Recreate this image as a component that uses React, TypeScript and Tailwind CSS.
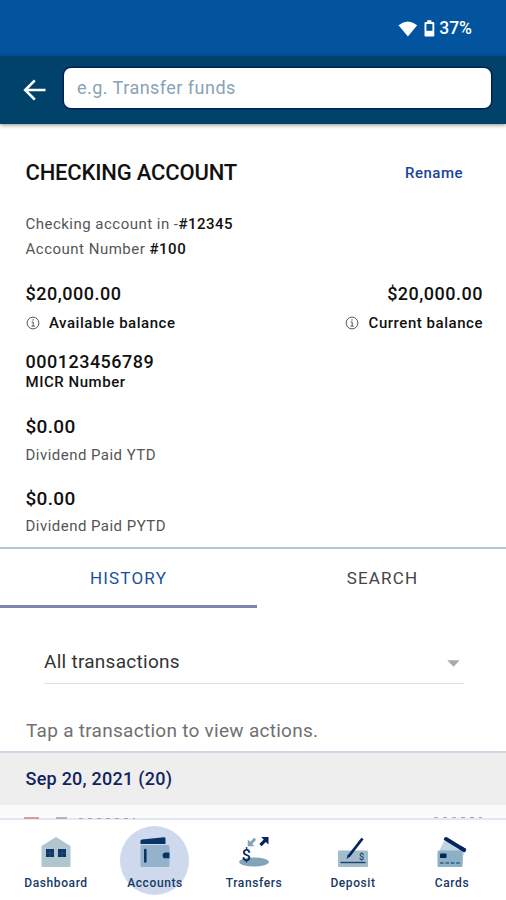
import React from "react";

function StatusBar() {
  return (
    <div className="flex h-[56px] shrink-0 items-center justify-end bg-[#02549e] pt-px pr-[34px] text-white">
      <svg width="20" height="16" viewBox="0 0 20 16" className="mr-[6px]">
        <path d="M0.5 4.2Q9.8 -3 19.2 4.2L9.9 15.5Z" fill="#fff" />
      </svg>
      <svg width="11" height="17" viewBox="0 0 11 17" className="mr-[4px]">
        <path d="M3.2 0.3h4.2v1.7H9.2Q10.3 2 10.3 3.1V15.4Q10.3 16.5 9.2 16.5H1.6Q0.5 16.5 0.5 15.4V3.1Q0.5 2 1.6 2H3.2Z" fill="#fff" />
        <rect x="2.4" y="4" width="6" height="6.8" fill="#02549e" />
      </svg>
      <span className="mt-px text-[17.5px] leading-none font-medium">37%</span>
    </div>
  );
}

function SearchHeader() {
  return (
    <div className="relative z-10 flex h-[68px] shrink-0 items-center bg-[#01426a] pr-[15px] pl-[23px] shadow-[0_1px_4px_rgba(0,0,0,0.45)]">
      <svg width="24" height="22" viewBox="0 0 24 22" fill="none" stroke="#fff" strokeWidth="2.6" className="mr-[17px] shrink-0">
        <path d="M22.5 11H2.5M11.8 1.4L2.2 11L11.8 20.6" />
      </svg>
      <div className="mb-[5px] flex h-[40px] flex-1 items-center rounded-[7px] bg-white pl-[13px] text-[18px] tracking-[0.47px] text-[#87a3b4] shadow-[0_0_0_1.5px_#02205c]">
        e.g. Transfer funds
      </div>
    </div>
  );
}

function InfoIcon() {
  return (
    <svg width="14" height="14" viewBox="0 0 14 14" fill="none" stroke="#444" strokeWidth="0.9">
      <circle cx="7" cy="7" r="5.9" />
      <path d="M5.6 6h1.6v4M5.4 10.1h3.4" />
      <circle cx="7" cy="3.9" r="0.7" fill="#444" stroke="none" />
    </svg>
  );
}

function AccountDetails() {
  return (
    <section className="h-[423px] shrink-0 pr-[23px] pl-[25.5px] pt-[34px] text-[15px] text-[#111]">
      <div className="flex h-[29px] items-center justify-between pr-[20px]">
        <h1 className="text-[22px] leading-none font-medium tracking-[-0.18px]">CHECKING ACCOUNT</h1>
        <span className="mt-[2px] text-[15px] font-medium tracking-[0.5px] text-[#1a449a]">Rename</span>
      </div>
      <div className="mt-[24px] h-[26px] leading-[26px] tracking-[0.48px] text-[#555]">
        Checking account in -<b className="font-medium text-[#111]">#12345</b>
      </div>
      <div className="h-[25px] leading-[25px] tracking-[0.5px] text-[#555]">
        Account Number <b className="font-medium text-[#111]">#100</b>
      </div>
      <div className="mt-[16px] flex h-[30px] items-center justify-between text-[18px] font-medium tracking-[0.5px]">
        <span>$20,000.00</span>
        <span>$20,000.00</span>
      </div>
      <div className="mt-[1px] flex h-[28px] items-center justify-between font-medium tracking-[0.54px]">
        <span className="flex items-center gap-[9.5px]"><InfoIcon />Available balance</span>
        <span className="flex items-center gap-[9.5px]"><InfoIcon />Current balance</span>
      </div>
      <div className="mt-[14px] h-[22px] text-[18px] leading-[22px] font-medium tracking-[0.5px]">000123456789</div>
      <div className="h-[20px] leading-[19px] font-medium tracking-[0.54px]">MICR Number</div>
      <div className="mt-[22px] h-[24px] text-[19px] leading-[24px] font-medium tracking-[0.3px]">$0.00</div>
      <div className="mt-[6px] h-[20px] leading-[20px] tracking-[0.47px] text-[#555]">Dividend Paid YTD</div>
      <div className="mt-[22px] h-[24px] text-[19px] leading-[24px] font-medium tracking-[0.3px]">$0.00</div>
      <div className="mt-[5px] h-[20px] leading-[20px] tracking-[0.47px] text-[#555]">Dividend Paid PYTD</div>
    </section>
  );
}

function Tabs() {
  return (
    <div className="flex h-[61px] shrink-0 border-t-2 border-[#b5c4df] text-[17px] tracking-[1.2px]">
      <div className="flex w-[257px] items-center justify-center border-b-[3px] border-[#8085ad] pt-[3px] text-[#1d4f9f]">HISTORY</div>
      <div className="flex flex-1 items-center justify-center border-b-[3px] border-transparent pt-[3px] pl-[2px] text-[#444]">SEARCH</div>
    </div>
  );
}

function DashboardIcon() {
  return (
    <svg width="34" height="32" viewBox="0 0 34 32">
      <path d="M17 1L31.5 10V29.5Q31.5 31 30 31H4Q2.500 31 2.500 29.5V10Z" fill="#b0c5ce" />
      <path d="M7 13h8v8H7zM19 13h8v8H19z" fill="#0b3668" />
      <path d="M7 17h8M11 13v8M19 17h8M23 13v8" stroke="#315880" strokeWidth="0.7" />
    </svg>
  );
}

function AccountsIcon() {
  return (
    <svg width="34" height="32" viewBox="0 0 34 32">
      <rect x="2.500" y="9" width="29" height="22" rx="1.500" fill="#94b2cc" />
      <path d="M2.500 4.700Q2.500 3.500 4 3.400L26 1.200Q27.500 1.100 27.500 2.500V8H2.500Z" fill="#083467" />
      <rect x="6" y="12.800" width="2.600" height="14" rx="1.200" fill="#083467" />
      <path d="M31.500 16.500h-4a2.900 2.900 0 0 0 0 5.800h4z" fill="#083467" />
    </svg>
  );
}

function TransfersIcon() {
  return (
    <svg width="34" height="32" viewBox="0 0 34 32">
      <ellipse cx="17" cy="26" rx="14.800" ry="4.600" fill="#82a3b8" />
      <path d="M10.800 10.300V3.500L13.200 5.800L17.200 1.800L19.200 3.800L15.200 7.900L17.600 10.300Z" fill="#82a3b8" />
      <path d="M31.500 1V8.500L28.900 5.900L24.500 10.300L22.300 8.100L26.700 3.600L24.100 1Z" fill="#06245c" />
      <text x="4.800" y="25.300" fontSize="16" fontFamily="Roboto, sans-serif" fill="#06245c">$</text>
    </svg>
  );
}

function DepositIcon() {
  return (
    <svg width="34" height="32" viewBox="0 0 34 32">
      <rect x="2" y="14.500" width="30" height="16.500" rx="1" fill="#a2bccb" />
      <path d="M4.500 26.500h25" stroke="#17436b" strokeWidth="1.400" />
      <text x="23" y="23.500" fontSize="9" fontFamily="Roboto, sans-serif" fill="#17436b">$</text>
      <path d="M12.500 20.500L26.500 2.500" stroke="#06245c" strokeWidth="2.800" />
      <path d="M10.500 23l1.200-3.800 2 1.500z" fill="#06245c" />
    </svg>
  );
}

function CardsIcon() {
  return (
    <svg width="34" height="32" viewBox="0 0 34 32">
      <path d="M9.500 4L31 15L28 20V28H8L5 13Z" fill="#c0d4e3" />
      <path d="M12 1.300Q10 0.500 9.300 2.200L8.700 3.800L28.300 15.800Q30 16.300 30.500 15L31.200 13Z" fill="#06245c" />
      <rect x="2.500" y="14.500" width="25" height="16.500" rx="1.500" fill="#8db0c5" />
      <path d="M24 13.200L28.300 15.800Q30 16.300 30.500 15L31.200 13L26 10Z" fill="#06245c" />
      <rect x="5" y="17.500" width="6.500" height="4.500" rx="0.800" fill="#06245c" />
      <path d="M5 27h21" stroke="#315d7f" strokeWidth="1.300" strokeDasharray="3.600 1.800" />
    </svg>
  );
}

const navItems = [
  { label: "Dashboard", Icon: DashboardIcon },
  { label: "Accounts", Icon: AccountsIcon, active: true },
  { label: "Transfers", Icon: TransfersIcon },
  { label: "Deposit", Icon: DepositIcon },
  { label: "Cards", Icon: CardsIcon },
];

function BottomNav() {
  return (
    <nav className="grid h-[80px] shrink-0 grid-cols-[repeat(5,99px)] pl-[6.500px] text-[12px] font-medium tracking-[0.6px] text-[#173a66]">
      {navItems.map(({ label, Icon, active }) => (
        <div key={label} className="relative flex flex-col items-center pt-[16px]">
          {active && <div className="absolute top-[6px] left-[14.500px] h-[69px] w-[69px] rounded-full bg-[#ced9ed]" />}
          <div className="relative -ml-px h-[32px]"><Icon /></div>
          <span className="relative mt-[8px] leading-[14px]">{label}</span>
        </div>
      ))}
    </nav>
  );
}

export default function App() {
  return (
    <div className="flex h-[900px] w-[506px] flex-col overflow-hidden bg-white font-['Roboto',sans-serif]">
      <StatusBar />
      <SearchHeader />
      <AccountDetails />
      <Tabs />
      <div className="mr-[42px] ml-[44px] mt-[34px] flex h-[42px] shrink-0 items-center justify-between border-b border-[#dedede] pr-[4px] text-[19px] tracking-[0.27px] text-[#333]">
        <span>All transactions</span>
        <svg width="13" height="7" viewBox="0 0 13 7" className="mt-[2px]"><path d="M0.300 0.300H12.700L6.500 6.700Z" fill="#aaa" /></svg>
      </div>
      <div className="mt-[32px] h-[30px] shrink-0 pl-[26px] text-[19px] leading-[30px] tracking-[0.28px] text-[#707070]">Tap a transaction to view actions.</div>
      <div className="mt-[5px] flex h-[54px] shrink-0 items-center border-t-2 border-[#ccd6e5] bg-[#eee] pb-[2px] pl-[25.5px] text-[18px] font-medium tracking-[0.25px] text-[#12245e]">Sep 20, 2021 (20)</div>
      <div className="relative h-[15px] shrink-0 border-b-2 border-[#e3e7f0] bg-[#f9fbfc]">
        <div className="absolute top-[12px] left-[24px] h-[2px] w-[15px] bg-[#dc9c9e]" />
        <div className="absolute top-[12px] left-[56px] h-[2px] w-[11px] bg-[#b5b5ba]" />
        <div className="absolute top-[13px] left-[79px] h-px w-[56px] bg-[repeating-linear-gradient(90deg,#aaaab0_0_4px,transparent_4px_9px)]" />
        <div className="absolute top-[12px] left-[434px] h-px w-[48px] bg-[repeating-linear-gradient(90deg,#aaaab0_0_4px,transparent_4px_9px)]" />
      </div>
      <BottomNav />
    </div>
  );
}
